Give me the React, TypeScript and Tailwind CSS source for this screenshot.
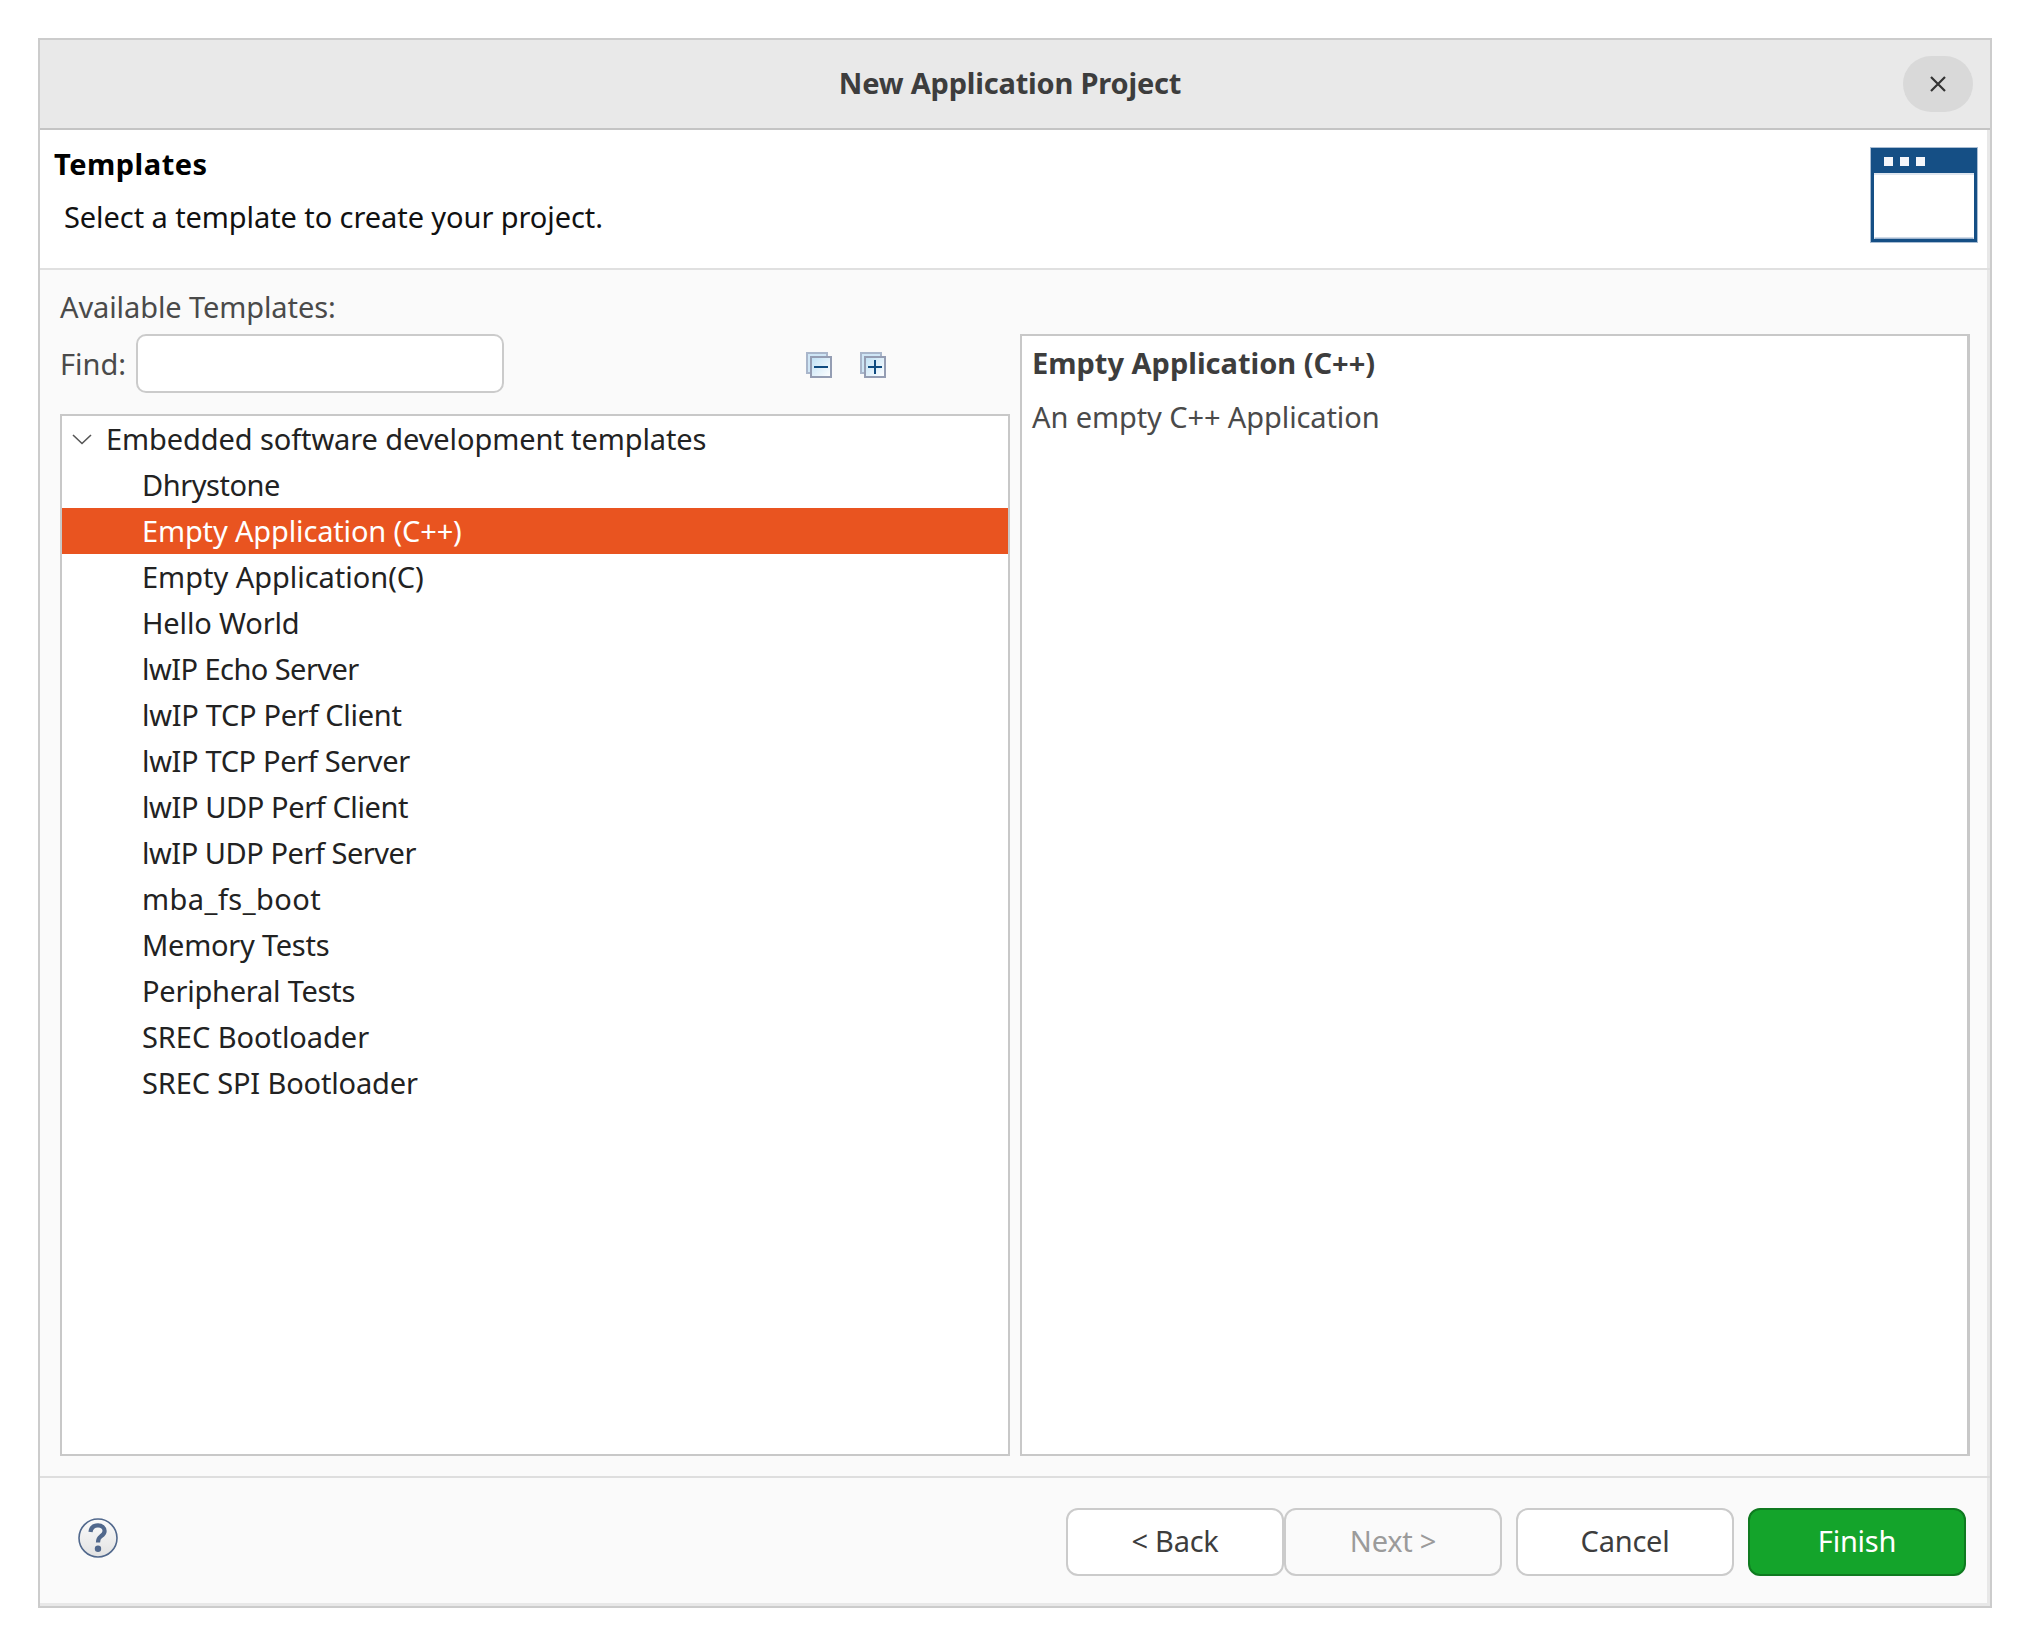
const F = "[font-family:'Noto_Sans','Open_Sans',sans-serif]";

const items: [string, string][] = [
  ["Dhrystone", "tracking-[-0.45px]"],
  ["Empty Application (C++)", "tracking-[-0.15px]"],
  ["Empty Application(C)", "tracking-[-0.03px]"],
  ["Hello World", "tracking-[-0.15px]"],
  ["lwIP Echo Server", "tracking-[-0.55px]"],
  ["lwIP TCP Perf Client", "tracking-[-0.3px]"],
  ["lwIP TCP Perf Server", "tracking-[-0.35px]"],
  ["lwIP UDP Perf Client", "tracking-[-0.4px]"],
  ["lwIP UDP Perf Server", "tracking-[-0.47px]"],
  ["mba_fs_boot", "tracking-[0.45px]"],
  ["Memory Tests", "tracking-[-0.25px]"],
  ["Peripheral Tests", "tracking-[-0.23px]"],
  ["SREC Bootloader", "tracking-[-0.05px]"],
  ["SREC SPI Bootloader", "tracking-[-0.15px]"],
];

function CollapseIcon({ plus }: { plus?: boolean }) {
  return (
    <svg width="26" height="26" viewBox="0 0 26 26">
      <defs>
        <linearGradient id={plus ? "gp" : "gm"} x1="0" y1="0" x2="1" y2="1">
          <stop offset="0" stopColor="#bfe0f5" />
          <stop offset="1" stopColor="#ffffff" />
        </linearGradient>
      </defs>
      <rect x="1" y="1" width="20" height="20" fill="#cfe6f6" stroke="#a9b6cb" strokeWidth="2" />
      <rect x="5" y="5" width="20" height="20" fill={`url(#${plus ? "gp" : "gm"})`} stroke="#949db3" strokeWidth="2" />
      <rect x="8" y="14" width="14" height="2" fill="#0f4b80" />
      {plus && <rect x="14" y="8" width="2" height="14" fill="#0f4b80" />}
    </svg>
  );
}

function WindowIcon() {
  return (
    <svg width="108" height="96" viewBox="0 0 108 96">
      <rect x="0.5" y="0.5" width="107" height="95" fill="#ffffff" stroke="#a9bdd3" strokeWidth="1" />
      <rect x="2.5" y="2.5" width="103" height="91" fill="#ffffff" stroke="#154f85" strokeWidth="3" />
      <rect x="4.5" y="90.5" width="99" height="1.5" fill="#9fb5cf" />
      <rect x="1" y="1" width="106" height="25" fill="#154f85" />
      <rect x="4" y="26" width="100" height="2" fill="#dfe6ef" />
      <rect x="14" y="10" width="9" height="9" fill="#f4f6fa" />
      <rect x="30" y="10" width="9" height="9" fill="#f4f6fa" />
      <rect x="46" y="10" width="9" height="9" fill="#f4f6fa" />
    </svg>
  );
}

function HelpIcon() {
  return (
    <svg width="40" height="40" viewBox="0 0 40 40">
      <defs>
        <linearGradient id="hg" x1="0" y1="0" x2="0" y2="1">
          <stop offset="0" stopColor="#fbfbfb" />
          <stop offset="1" stopColor="#e2e2e2" />
        </linearGradient>
      </defs>
      <circle cx="20" cy="20" r="19" fill="url(#hg)" stroke="#51688c" strokeWidth="1.6" />
      <path d="M12.5 14 C13 9.5 16 7.4 20 7.4 C24 7.4 26.6 9.8 26.6 13 C26.6 15.8 24.8 17 22.8 18.4 C20.8 19.8 20 21 20 24.5" stroke="#51688c" strokeWidth="4.2" fill="none" />
      <circle cx="20" cy="30.8" r="3.2" fill="#51688c" />
    </svg>
  );
}

function Btn({ label, kind }: { label: string; kind?: "disabled" | "primary" }) {
  const cls =
    kind === "primary"
      ? "bg-[#14a42b] border-[#0f7a20] text-white"
      : kind === "disabled"
        ? "bg-[#fafafa] border-[#cbcbcb] text-[#9b9b9b]"
        : "bg-white border-[#cbcbcb] text-[#3d3d3d]";
  return (
    <div className={`w-[218px] h-[68px] rounded-[12px] border-2 flex items-center justify-center pb-[2px] text-[29px] tracking-[-0.25px] ${cls}`}>
      {label}
    </div>
  );
}

export default function App() {
  return (
    <div className={`w-[2030px] h-[1646px] bg-white p-[38px] ${F}`}>
      <div className="w-[1954px] h-[1570px] border-2 border-[#cccccc] pb-[3px] shadow-[inset_-3px_-3px_0_#e8e8e8] flex flex-col bg-[#fafafa]">
        <div className="h-[90px] shrink-0 bg-[#e9e9e9] border-b-2 border-[#c4c4c4] relative flex items-center justify-center">
          <span className="mb-[2px] mr-[10px] text-[29px] font-bold text-[#3d3d3d] tracking-[-0.19px]">New Application Project</span>
          <div className="absolute left-[1863px] top-[16px] w-[70px] h-[56px] rounded-full bg-[#d9d9d9] flex items-center justify-center">
            <svg width="18" height="18" viewBox="0 0 18 18">
              <path d="M2 2 L16 16 M16 2 L2 16" stroke="#333333" strokeWidth="2.2" fill="none" />
            </svg>
          </div>
        </div>

        <div className="h-[140px] shrink-0 bg-white border-b-2 border-[#e0e0e0] shadow-[inset_-3px_0_0_#e8e8e8] flex justify-between pl-[14px] pr-[12px]">
          <div className="flex flex-col">
            <div className="mt-[16px] text-[29px] leading-[36px] font-bold text-black tracking-[0.5px]">Templates</div>
            <div className="mt-[15px] ml-[10px] text-[29px] leading-[40px] text-[#111111] tracking-[-0.08px]">Select a template to create your project.</div>
          </div>
          <div className="mt-[17px]">
            <WindowIcon />
          </div>
        </div>

        <div className="flex-1 min-h-0 flex flex-col px-[20px] pb-[20px]">
          <div className="mt-[17px] h-[40px] text-[29px] leading-[40px] text-[#4a4a4a] tracking-[-0.1px]">Available Templates:</div>
          <div className="flex-1 min-h-0 flex gap-[10px] mt-[7px]">
            <div className="w-[950px] flex flex-col">
              <div className="h-[59px] flex items-center shrink-0">
                <span className="text-[29px] text-[#4a4a4a] w-[76px]">Find:</span>
                <div className="w-[368px] h-[59px] bg-white border-2 border-[#cbcbcb] rounded-[10px]" />
                <div className="ml-[302px] flex gap-[28px] mt-[3px]">
                  <CollapseIcon />
                  <CollapseIcon plus />
                </div>
              </div>
              <div className="mt-[21px] flex-1 min-h-0 bg-white border-2 border-[#c8c8c8] text-[29px] text-[#222222]">
                <div className="h-[46px] flex items-center tracking-[-0.1px]">
                  <svg className="ml-[9px]" width="22" height="14" viewBox="0 0 22 14">
                    <path d="M2 3 L11 11.5 L20 3" stroke="#555555" strokeWidth="1.6" fill="none" />
                  </svg>
                  <span className="ml-[13px]">Embedded software development templates</span>
                </div>
                {items.map(([t, tr]) => (
                  <div
                    key={t}
                    className={`h-[46px] flex items-center pl-[80px] ${tr} ${t === "Empty Application (C++)" ? "bg-[#e95420] text-white" : ""}`}
                  >
                    {t}
                  </div>
                ))}
              </div>
            </div>
            <div className="flex-1 bg-white border-2 border-[#c8c8c8] border-r-[3px] pl-[10px]">
              <div className="mt-[7px] text-[29px] leading-[40px] font-bold text-[#3d3d3d]">Empty Application (C++)</div>
              <div className="mt-[14px] text-[29px] leading-[40px] text-[#4a4a4a] tracking-[-0.1px]">An empty C++ Application</div>
            </div>
          </div>
        </div>

        <div className="h-[127px] shrink-0 border-t-2 border-[#dedede] flex items-start justify-between pl-[38px] pr-[24px]">
          <div className="mt-[40px]">
            <HelpIcon />
          </div>
          <div className="mt-[30px] flex">
            <Btn label="< Back" />
            <Btn label="Next >" kind="disabled" />
            <div className="ml-[14px]">
              <Btn label="Cancel" />
            </div>
            <div className="ml-[14px]">
              <Btn label="Finish" kind="primary" />
            </div>
          </div>
        </div>
      </div>
    </div>
  );
}
